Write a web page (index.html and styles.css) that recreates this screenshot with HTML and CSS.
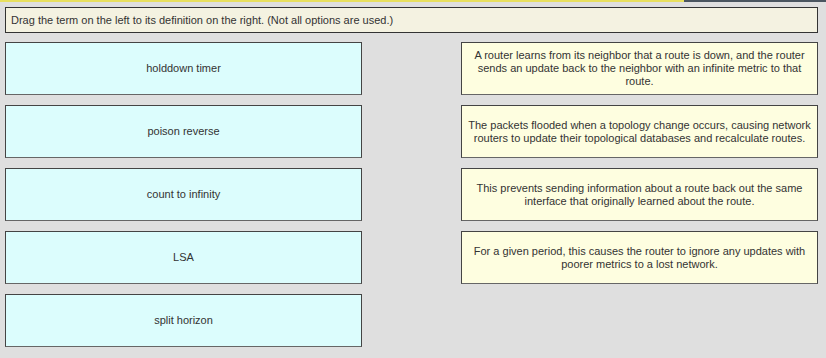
FILE: index.html
```html
<!DOCTYPE html>
<html lang="en">
<head>
    <meta charset="UTF-8">
    <title>Drag and Drop</title>
    <link rel="stylesheet" href="styles.css">
</head>
<body>
    <div class="top-line">
        <div class="top-line-progress"></div>
    </div>

    <div class="instructions">Drag the term on the left to its definition on the right. (Not all options are used.)</div>

    <div class="board">
        <div class="terms">
            <div class="term">holddown timer</div>
            <div class="term">poison reverse</div>
            <div class="term">count to infinity</div>
            <div class="term">LSA</div>
            <div class="term">split horizon</div>
        </div>
        <div class="definitions">
            <div class="definition">A router learns from its neighbor that a route is down, and the router sends an update back to the neighbor with an infinite metric to that route.</div>
            <div class="definition">The packets flooded when a topology change occurs, causing network routers to update their topological databases and recalculate routes.</div>
            <div class="definition">This prevents sending information about a route back out the same interface that originally learned about the route.</div>
            <div class="definition">For a given period, this causes the router to ignore any updates with poorer metrics to a lost network.</div>
        </div>
    </div>
</body>
</html>
```

FILE: styles.css
```css
body {
    margin: 0;
    background-color: #dfdfdf;
    font-family: 'Liberation Sans', Arial, sans-serif;
    font-size: 11px;
    color: #333;
    width: 826px;
    height: 358px;
    overflow: hidden;
}
.top-line {
    height: 2px;
    background-color: #4a5560;
}
.top-line-progress {
    width: 684px;
    height: 2px;
    background-color: #e8e060;
}
.instructions {
    margin: 5px 8px 0 5px;
    height: 24px;
    line-height: 24px;
    padding-left: 5px;
    background-color: #f4f2e1;
    border: 1px solid #333;
}
.board {
    display: flex;
    justify-content: space-between;
    margin: 9px 8px 0 5px;
}
.terms,
.definitions {
    display: flex;
    flex-direction: column;
    gap: 10px;
    width: 357px;
}
.term,
.definition {
    box-sizing: border-box;
    height: 53px;
    display: flex;
    align-items: center;
    justify-content: center;
    text-align: center;
    border: 1px solid #444;
    border-bottom-color: #666;
    line-height: 13px;
}
.term {
    background-color: #dcfdfd;
}
.definition {
    background-color: #fefee0;
    padding: 0 6px;
}
```
